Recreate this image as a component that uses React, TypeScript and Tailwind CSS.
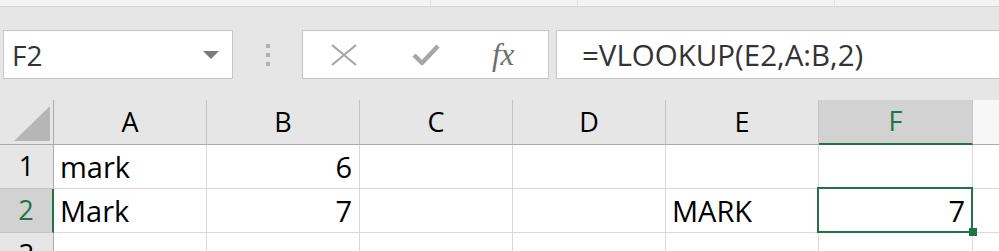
import React from 'react'

const cols = ['A', 'B', 'C', 'D', 'E', 'F']

type Cell = { text?: string; align?: 'left' | 'right' }

const rows: { n: number; cells: Cell[] }[] = [
  { n: 1, cells: [{ text: 'mark' }, { text: '6', align: 'right' }, {}, {}, {}, {}] },
  { n: 2, cells: [{ text: 'Mark' }, { text: '7', align: 'right' }, {}, {}, { text: 'MARK' }, { text: '7', align: 'right' }] },
  { n: 3, cells: [{}, {}, {}, {}, {}, {}] },
]

export default function App() {
  return (
    <div className="w-[999px] h-[251px] overflow-hidden bg-[#e6e6e6] font-['Open_Sans',sans-serif]">
      {/* ribbon edge */}
      <div className="h-[7px] bg-[#f3f3f3] border-b border-[#d6d6d6] flex">
        <div className="w-[431px] border-r border-[#e2e2e2]"></div>
        <div className="w-[147px] border-r border-[#e2e2e2]"></div>
        <div className="w-[257px] border-r border-[#e2e2e2]"></div>
      </div>

      {/* formula bar */}
      <div className="flex items-stretch mt-[23px] h-[49px]">
        <div className="ml-[3px] w-[230px] bg-white border border-[#c6c6c6] flex items-center justify-between pl-[8px] pr-[13px]">
          <span className="text-[28px] text-[#333333] leading-none">F2</span>
          <svg width="16" height="8" viewBox="0 0 16 8">
            <polygon points="0,0 16,0 8,8" fill="#7a7a7a" />
          </svg>
        </div>
        <div className="w-[69px] flex flex-col items-center justify-center gap-[5px] pl-[1px]">
          <div className="w-[4px] h-[4px] bg-[#b2b2b2]"></div>
          <div className="w-[4px] h-[4px] bg-[#b2b2b2]"></div>
          <div className="w-[4px] h-[4px] bg-[#b2b2b2]"></div>
        </div>
        <div className="w-[247px] bg-white border border-[#c6c6c6] flex items-center">
          <svg className="ml-[28px]" width="26" height="22" viewBox="0 0 26 22">
            <path d="M1 1 L25 21 M25 1 L1 21" stroke="#a6a6a6" strokeWidth="2.2" fill="none" />
          </svg>
          <svg className="ml-[55px]" width="28" height="22" viewBox="0 0 28 22">
            <path d="M2 11 L10 19 L26 2" stroke="#a6a6a6" strokeWidth="4.5" fill="none" strokeLinejoin="round" />
          </svg>
          <span className="ml-[52px] font-['Liberation_Serif',serif] italic text-[31px] text-[#6e6e6e] leading-none">fx</span>
        </div>
        <div className="ml-[7px] flex-1 bg-white border border-r-0 border-[#c6c6c6] flex items-center pl-[25px]">
          <span className="text-[29.5px] text-[#333333] leading-none">=VLOOKUP(E2,A:B,2)</span>
        </div>
      </div>

      {/* sheet grid */}
      <div className="mt-[21px] grid grid-cols-[54px_153px_153px_153px_153px_153px_154px_1fr]">
        <div className="h-[45px] border-r border-b border-[#ababab] bg-[#e6e6e6] flex items-end justify-end pr-[3px] pb-[3px]">
          <svg width="36" height="35" viewBox="0 0 36 35">
            <polygon points="36,0 36,35 0,35" fill="#b6b6b6" />
          </svg>
        </div>
        {cols.map(c => {
          const active = c === 'F'
          return (
            <div
              key={c}
              className={
                active
                  ? 'h-[45px] bg-[#d2d2d2] border-r border-[#c4c4c4] border-b-2 border-b-[#217346] flex items-center justify-center text-[27px] text-[#217346]'
                  : 'h-[45px] bg-[#e6e6e6] border-r border-b border-r-[#c4c4c4] border-b-[#ababab] flex items-center justify-center text-[27px] text-black'
              }
            >
              {c}
            </div>
          )
        })}
        <div className="h-[45px] bg-[#f7f7f7] border-b border-[#ababab]"></div>

        {rows.map(r => (
          <React.Fragment key={r.n}>
            <div
              className={
                r.n === 2
                  ? 'h-[44px] bg-[#d2d2d2] border-r-2 border-r-[#217346] border-b border-b-[#c4c4c4] flex items-center justify-center text-[27px] text-[#217346]'
                  : 'h-[44px] bg-[#e6e6e6] border-r border-b border-r-[#ababab] border-b-[#c4c4c4] flex items-center justify-center text-[27px] text-black'
              }
            >
              {r.n}
            </div>
            {r.cells.map((cell, i) => {
              const selected = r.n === 2 && i === 5
              return (
                <div
                  key={i}
                  className={
                    'relative h-[44px] bg-white border-r border-b border-[#d9d9d9] flex items-center text-[29px] text-black leading-none ' +
                    (selected ? 'z-10 ' : '') +
                    (cell.align === 'right' ? 'justify-end pr-[7px]' : 'justify-start pl-[6px]')
                  }
                >
                  {cell.text}
                  {selected && (
                    <>
                      <div className="absolute -left-[2px] -top-[2px] -right-[1px] -bottom-[1px] border-2 border-[#217346]"></div>
                      <div className="absolute -right-[5px] -bottom-[4px] w-[8px] h-[8px] bg-[#217346]"></div>
                    </>
                  )}
                </div>
              )
            })}
            <div className="h-[44px] bg-white border-b border-[#d9d9d9]"></div>
          </React.Fragment>
        ))}
      </div>
    </div>
  )
}
